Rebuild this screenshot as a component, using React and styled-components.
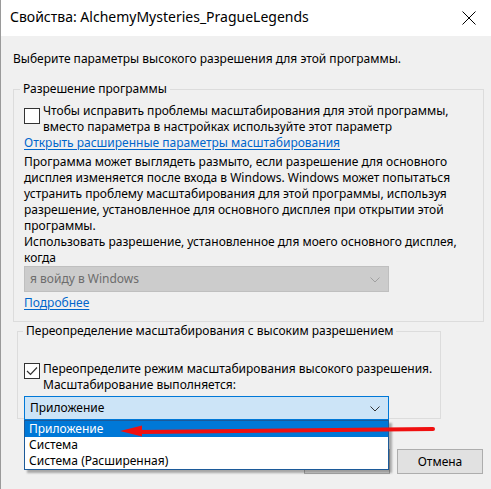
import styled, { createGlobalStyle } from 'styled-components';

const GlobalStyle = createGlobalStyle`
	* { box-sizing: border-box; }
	html, body { margin: 0; padding: 0; background: #f0f0f0; }
	body {
		width: 491px;
		height: 489px;
		overflow: hidden;
		font-family: 'Noto Sans', 'Liberation Sans', sans-serif;
		font-size: 12px;
		color: #000;
	}
`;

export default function App() {
	return (
		<>
			<GlobalStyle />
			<Window>
				<TitleBar>
					<Title>Свойства: AlchemyMysteries_PragueLegends</Title>
					<CloseButton>
						<svg width="14" height="14" viewBox="0 0 14 14">
							<path d="M0.5 0.5 L13.5 13.5 M13.5 0.5 L0.5 13.5" stroke="#000" strokeWidth="1" />
						</svg>
					</CloseButton>
				</TitleBar>

				<Body>
					<Intro>Выберите параметры высокого разрешения для этой программы.</Intro>

					<Group $left={13} $width={471} $padTop={6} $padX={10} $padBottom={10}>
						<Legend $shift={-4}>Разрешение программы</Legend>
						<CheckRow>
							<CheckBox />
							<span>
								Чтобы исправить проблемы масштабирования для этой программы,
								<br />
								вместо параметра в настройках используйте этот параметр
							</span>
						</CheckRow>
						<Link>Открыть расширенные параметры масштабирования</Link>
						<Paragraph>
							Программа может выглядеть размыто, если разрешение для основного
							<br />
							дисплея изменяется после входа в Windows. Windows может попытаться
							<br />
							устранить проблему масштабирования для этой программы, используя
							<br />
							разрешение, установленное для основного дисплея при открытии этой
							<br />
							программы.
							<br />
							Использовать разрешение, установленное для моего основного дисплея,
							<br />
							когда
						</Paragraph>
						<Select $disabled>
							<span>я войду в Windows</span>
							<Chevron $color="#a0a0a0" />
						</Select>
						<Link $top={3}>Подробнее</Link>
					</Group>

					<Group $left={17} $width={424} $top={1} $padTop={22} $padX={6} $padBottom={0}>
						<Legend $shift={-1}>Переопределение масштабирования с высоким разрешением</Legend>
						<CheckRow>
							<CheckBox $checked>
								<svg width="12" height="10" viewBox="0 0 12 10">
									<path d="M1 5 L4.5 8.5 L11 1.5" stroke="#333" strokeWidth="1.2" fill="none" />
								</svg>
							</CheckBox>
							<span>
								Переопределите режим масштабирования высокого разрешения.
								<br />
								Масштабирование выполняется:
							</span>
						</CheckRow>
						<SelectWrap>
							<Select $open>
								<span>Приложение</span>
								<Chevron $color="#333" />
							</Select>
							<OptionList>
								<Option $active>Приложение</Option>
								<Option>Система</Option>
								<Option>Система (Расширенная)</Option>
							</OptionList>
						</SelectWrap>
					</Group>

					<ButtonRow>
						<Button>OK</Button>
						<Button>Отмена</Button>
					</ButtonRow>
				</Body>

				<Arrow width="320" height="16" viewBox="0 0 320 16">
					<path d="M22 9 L316 6" stroke="#f01010" strokeWidth="4" strokeLinecap="round" />
					<path d="M3 8 L25 2.5 L25 13.5 Z" fill="#f01010" />
				</Arrow>
			</Window>
		</>
	);
}

function Chevron({ $color }) {
	return (
		<ChevronIcon width="10" height="6" viewBox="0 0 10 6">
			<path d="M0.5 0.5 L5 5 L9.5 0.5" stroke={$color} strokeWidth="1" fill="none" />
		</ChevronIcon>
	);
}

const Window = styled.div`
	position: relative;
	width: 491px;
	height: 489px;
	border-left: 1px solid #9a9a9a;
	background: #f0f0f0;
`;

const TitleBar = styled.div`
	height: 36px;
	background: #ffffff;
	display: flex;
	align-items: center;
	justify-content: space-between;
	padding-left: 9px;
`;

const Title = styled.div`
	font-size: 14px;
	line-height: 20px;
	margin-top: -2px;
`;

const CloseButton = styled.div`
	width: 46px;
	height: 36px;
	display: flex;
	align-items: center;
	justify-content: center;
	margin-top: -1px;
	margin-right: -1px;
`;

const Body = styled.div`
	padding-top: 15px;
	display: flex;
	flex-direction: column;
	line-height: 16px;
`;

const Intro = styled.div`
	margin-left: 12px;
`;

const Group = styled.fieldset`
	margin: ${(p) => (p.$top !== undefined ? p.$top : 14)}px 0 0 ${(p) => p.$left - 1}px;
	width: ${(p) => p.$width}px;
	border: 1px solid #dcdcdc;
	padding: ${(p) => p.$padTop}px ${(p) => p.$padX}px ${(p) => p.$padBottom}px;
	display: flex;
	flex-direction: column;
	align-items: flex-start;
	min-width: 0;
`;

const Legend = styled.legend`
	padding: 0 3px;
	margin-left: ${(p) => p.$shift}px;
	line-height: 16px;
`;

const CheckRow = styled.div`
	display: flex;
	align-items: flex-start;
	gap: 3px;
`;

const CheckBox = styled.div`
	width: 16px;
	height: 16px;
	flex: none;
	margin-top: ${(p) => (p.$checked ? 2 : 5)}px;
	border: 1px solid #333333;
	background: #ffffff;
	display: flex;
	align-items: center;
	justify-content: center;
`;

const Link = styled.div`
	margin-top: ${(p) => p.$top || 0}px;
	color: #0066cc;
	text-decoration: underline;
	text-underline-offset: 2px;
`;

const Paragraph = styled.div`
	margin-top: 3px;
`;

const SelectWrap = styled.div`
	position: relative;
	margin-top: 3px;
	margin-bottom: -2px;
`;

const Select = styled.div`
	width: 365px;
	height: ${(p) => (p.$open ? 24 : 26)}px;
	display: flex;
	align-items: center;
	justify-content: space-between;
	padding: 0 5px 0 5px;
	background: ${(p) => (p.$open ? '#cce4f7' : '#cccccc')};
	border: 1px solid ${(p) => (p.$open ? '#0078d7' : '#bfbfbf')};
	color: ${(p) => (p.$disabled ? '#6d6d6d' : '#000000')};
`;

const ChevronIcon = styled.svg`
	margin-right: 3px;
	margin-top: 1px;
`;

const OptionList = styled.div`
	position: absolute;
	top: 100%;
	left: 0;
	width: 365px;
	background: #ffffff;
	border: 1px solid #1c5a99;
	box-shadow: 3px 3px 2px rgba(0, 0, 0, 0.3);
	z-index: 2;
`;

const Option = styled.div`
	height: 16px;
	line-height: 16px;
	padding-left: 4px;
	background: ${(p) => (p.$active ? '#0078d7' : 'transparent')};
	color: ${(p) => (p.$active ? '#ffffff' : '#000000')};
`;

const ButtonRow = styled.div`
	margin-top: 30px;
	padding-right: 8px;
	display: flex;
	justify-content: flex-end;
	gap: 7px;
`;

const Button = styled.div`
	width: 86px;
	height: 25px;
	display: flex;
	align-items: center;
	justify-content: center;
	background: #e1e1e1;
	border: 1px solid #adadad;
`;

const Arrow = styled.svg`
	position: absolute;
	left: 116px;
	top: 423px;
	z-index: 3;
`;
